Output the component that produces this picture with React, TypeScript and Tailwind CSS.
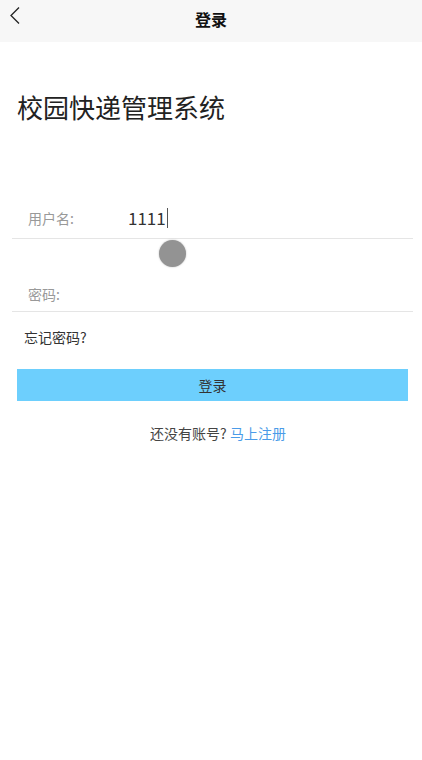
import React from 'react';

const font = { fontFamily: '"Noto Sans CJK SC", "Noto Sans", sans-serif' };

const App = () => {
  return (
    <div className="relative w-full min-h-[760px] bg-white" style={font}>
      {/* Header */}
      <div className="relative flex h-[42px] items-start justify-center bg-[#f7f7f7] pt-[11px]">
        <button className="absolute left-[8px] top-[6px] p-0" aria-label="返回">
          <svg width="16" height="20" viewBox="0 0 16 20" fill="none">
            <path d="M11 1.5 L3 9.5 L11 17.5" stroke="#222" strokeWidth="1.3" />
          </svg>
        </button>
        <h1 className="text-[16px] font-bold text-[#111] leading-none">登录</h1>
      </div>

      {/* Title */}
      <div className="pl-[17px] pt-[48px]">
        <h2 className="text-[26px] text-[#222] leading-[34px]">校园快递管理系统</h2>
      </div>

      {/* Form */}
      <div className="mt-[74px] pl-[12px] pr-[9px]">
        <div className="flex h-[41px] items-center border-b border-[#e5e5e5]">
          <span className="w-[116px] pl-[16px] text-[14px] text-[#999]">用户名:</span>
          <span className="flex items-center text-[17px] text-[#333]">
            1111
            <span className="ml-[1px] inline-block h-[20px] w-[1px] bg-[#555]" />
          </span>
        </div>
        <div className="flex h-[73px] items-end border-b border-[#e5e5e5] pb-[6px]">
          <span className="pl-[16px] text-[14px] text-[#999]">密码:</span>
        </div>
      </div>

      <div className="px-[24px] pt-[15px] text-[14px] text-[#333]">忘记密码?</div>

      <div className="pl-[17px] pr-[14px] pt-[21px]">
        <button className="flex h-[32px] w-full items-center justify-center bg-[#6dcffd] text-[14px] text-[#333]">
          登录
        </button>
      </div>

      <div className="pt-[22px] text-center text-[14px] text-[#444] pl-[14px]">
        还没有账号? <span className="text-[#4a9be8]">马上注册</span>
      </div>

      {/* touch indicator */}
      <div className="absolute left-[159px] top-[240px] h-[27px] w-[27px] rounded-full bg-[#939393] shadow-[0_0_2px_#bbb]" />
    </div>
  );
};

export default App;
